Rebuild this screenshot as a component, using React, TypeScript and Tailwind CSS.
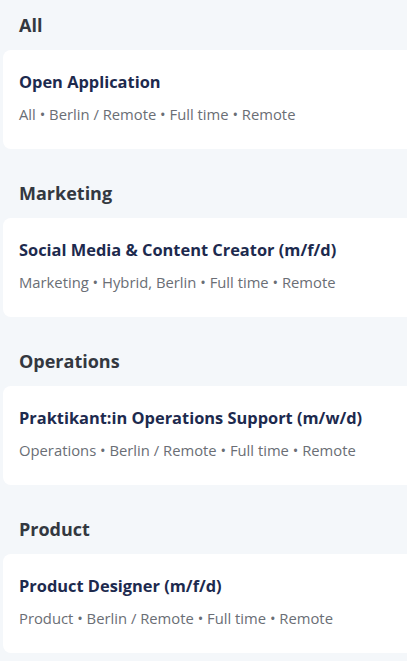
const sections = [
  {
    name: "All",
    jobs: [{ title: "Open Application", meta: ["All", "Berlin / Remote", "Full time", "Remote"] }],
  },
  {
    name: "Marketing",
    jobs: [
      {
        title: "Social Media & Content Creator (m/f/d)",
        meta: ["Marketing", "Hybrid, Berlin", "Full time", "Remote"],
      },
    ],
  },
  {
    name: "Operations",
    jobs: [
      {
        title: "Praktikant:in Operations Support (m/w/d)",
        meta: ["Operations", "Berlin / Remote", "Full time", "Remote"],
      },
    ],
  },
  {
    name: "Product",
    jobs: [{ title: "Product Designer (m/f/d)", meta: ["Product", "Berlin / Remote", "Full time", "Remote"] }],
  },
];

export default function App() {
  return (
    <div className="min-h-screen bg-[#f4f7fa] pl-[3px] font-['Open_Sans',sans-serif]">
      {sections.map((s) => (
        <section key={s.name} className="flex flex-col">
          <h2 className="flex h-[50px] items-center pl-4 text-lg font-bold text-[#333840]">{s.name}</h2>
          {s.jobs.map((job) => (
            <JobCard key={job.title} title={job.title} meta={job.meta} />
          ))}
          <div className="h-[19px]" />
        </section>
      ))}
    </div>
  );
}

function JobCard({ title, meta }: { title: string; meta: string[] }) {
  return (
    <div className="-mr-2 flex h-[99px] flex-col rounded-lg bg-white px-4 pt-[20px]">
      <h3 className="text-[16.4px] font-bold leading-6 text-[#1d2a4e]">{title}</h3>
      <p className="mt-2 text-[14.8px] leading-6 text-[#6a6e75]">{meta.join(" • ")}</p>
    </div>
  );
}
